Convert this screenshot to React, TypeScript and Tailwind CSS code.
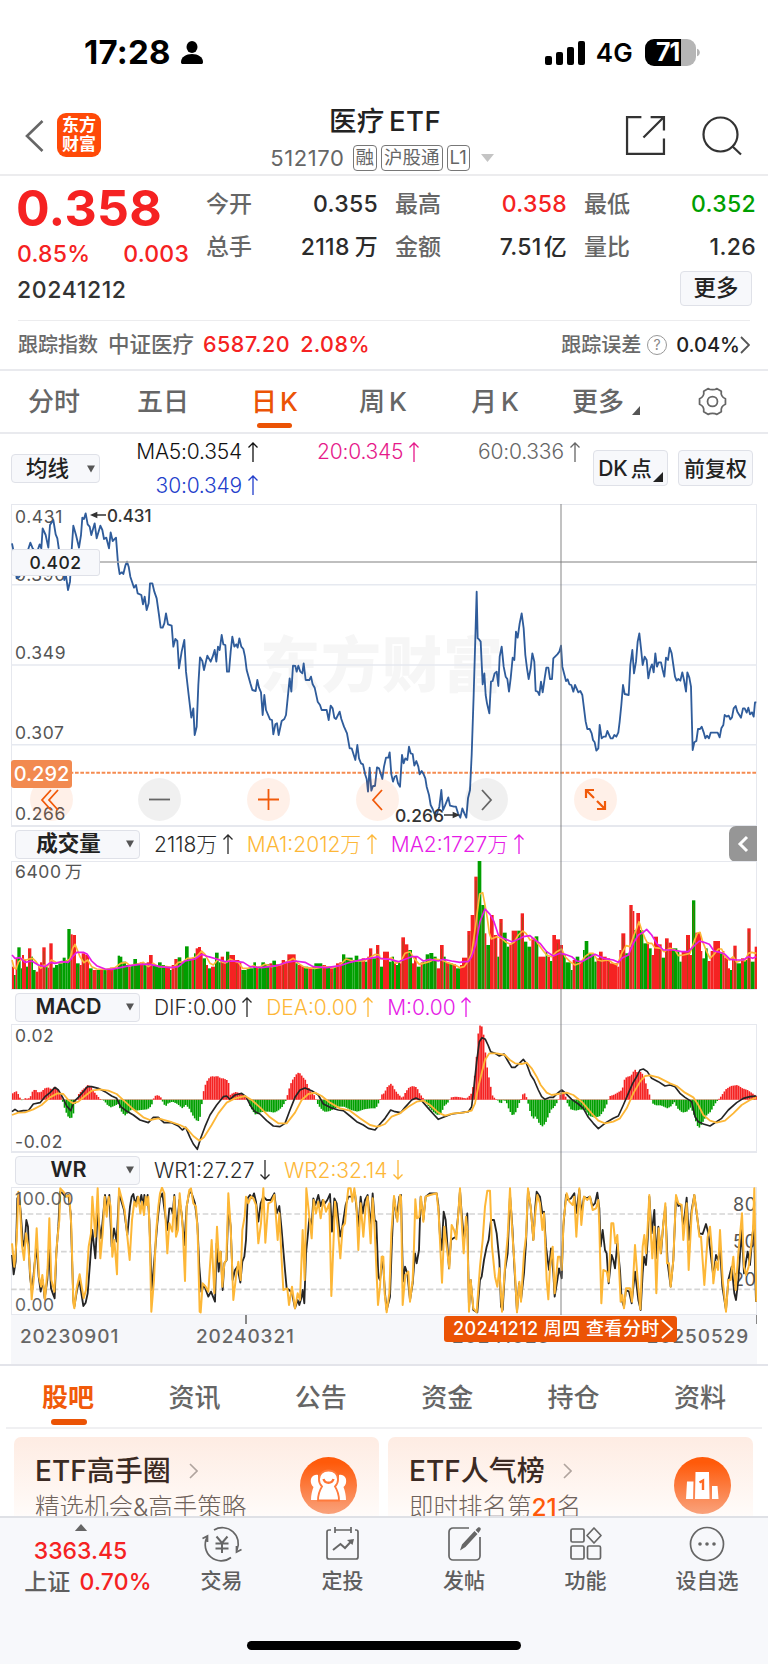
import React from "react";

const PRICE_A =
  "36,145 42,175 50,250 58,245 70,200 84,165 91,143 98,160 110,175 119,148 124,160 128,100 137,120 145,158 150,90 160,75 167,118 172,130 177,165 185,200 193,255 197,235 204,285 210,260 215,165 220,92 228,120 237,158 243,120 247,68 252,72 257,55 263,88 269,95 274,120 284,85 290,130 301,92 307,105 312,132 319,128 327,160 332,112 338,138 348,128 354,205 359,237 366,232 370,237 376,212 381,200 386,215 391,245 402,278 408,270 413,295 424,300 429,328 434,305 440,345 446,325 450,265 457,265 463,290 470,310 477,360 482,398 488,398 493,385 498,355 504,388 515,392 520,455 526,432 532,438 537,520 545,470 553,435 558,530 566,600 574,668 580,640 584,720 590,695 595,570 600,487 607,498 612,525 622,482 632,500 638,485 644,465 649,500 654,455 659,465 665,420 670,448 676,450 681,530 687,530 692,470 697,425 703,455 709,448 713,458 718,430 724,455 730,462 735,485 740,525 751,565 757,585 767,588 772,555 777,578 783,592 788,660 793,600 798,645 810,673 816,675 820,718 826,688 831,685 836,720 845,678 853,672 858,660 863,610 869,550 874,590 879,512 886,513 890,530 895,512 901,530 907,535 911,505 917,555 928,555 933,545 938,568 944,578 953,620 960,630 965,645 980,645 986,675 992,632 998,640 1003,668 1008,672 1019,650 1024,672 1032,695 1041,715 1049,760 1055,760 1066,795 1072,750 1077,790 1083,805 1089,808 1096,840 1100,852 1104,890 1109,818 1114,887 1119,873 1125,873 1131,817 1137,820 1142,852 1147,852";
const PRICE_B =
  "7,852 12,815 18,788 25,788 29,772 34,838 39,860 44,845 49,842 54,865 60,875 66,780 71,805 76,790 82,795 87,755 92,775 98,777 103,812 109,798 115,815 119,838 125,828 131,838 136,850 140,875 147,900 152,930 158,942 163,955 168,965 173,950 178,935 184,885 189,945 195,932 205,907 210,932 222,935 228,935 234,955 241,968 247,940 253,955 259,968 264,910 270,885 275,780 281,600 286,430 290,290 293,430 296,432 302,440 308,568 313,535 317,600 321,625 328,655 333,560 338,558 344,535 350,530 355,573 359,485 365,455 371,515 377,545 382,552 387,590 392,550 398,488 403,495 408,410 413,428 419,385 425,355 431,400 436,480 441,520 446,552 452,520 457,475 463,500 467,588 473,590 478,600 483,560 488,592 494,550 499,518 505,518 510,552 516,552 520,490 532,478 538,470 543,452 547,515 558,558 563,553 568,568 574,570 580,590 585,570 595,592 601,588 607,600 612,640 617,680 622,702 629,702 635,715 639,735 644,742 649,767 655,760 659,690 665,730 671,725 677,725 682,708 692,730 698,730 703,720 709,725 715,712 719,680 724,630 729,570 734,597 746,600 751,510 757,465 762,535 768,500 773,440 778,415 783,460 788,510 794,485 800,495 805,550 811,520 816,508 821,532 826,475 831,515 836,502 843,502 848,525 853,545 858,488 864,495 869,458 875,475 880,510 885,545 890,557 895,552 901,557 907,532 912,555 918,590 922,532 928,548 933,575 936,690 938,765 943,742 949,738 954,702 960,702 965,695 971,712 976,730 981,722 987,730 992,713 1013,713 1019,727 1024,700 1030,690 1034,660 1040,665 1046,662 1051,673 1056,667 1061,640 1067,633 1072,650 1083,668 1089,640 1094,640 1100,653 1105,638 1110,658 1116,652 1121,665 1125,622 1129,622";

/* Volume runs: "x top colour", each run reaches to the start of the next one. */
const VOL_A =
  "36 425 r,42 450 g,47 400 r,52 367 g,62 430 g,66 390 r,72 402 r,78 425 g,84 370 r,94 395 g,99 435 g,107 440 r,115 420 r,120 412 r,127 367 r,137 425 g,143 428 r,148 355 r,158 428 g,165 420 g,175 415 g,188 398 g,197 405 g,202 312 g,212 328 r,218 330 r,228 415 g,239 420 r,245 385 r,256 390 r,267 430 g,278 435 r,290 435 g,300 433 r,310 435 g,320 433 r,330 428 r,340 432 g,353 392 g,360 395 g,367 410 g,378 420 g,385 425 r,392 420 g,400 402 g,411 415 g,420 412 r,430 415 g,440 412 r,447 390 r,458 420 g,474 412 g,485 420 g,495 425 r,510 435 g,515 420 r,523 402 r,533 397 g,544 410 g,555 364 g,566 400 g,575 398 r,582 385 g,587 370 r,594 366 r,603 378 r,608 400 g,618 420 r,624 430 g,633 425 r,645 383 g,656 412 g,662 395 r,672 415 r,678 380 g,688 390 r,705 405 r,718 412 r,724 435 g,740 430 g,760 412 g,768 428 r,775 425 g,784 412 g,795 418 g,808 415 r,817 407 g,828 418 r,845 405 r,855 410 r,862 388 r,887 415 g,893 420 r,905 425 r,912 425 g,925 428 r,937 425 g,943 415 g,967 420 r,978 425 g,990 430 r,1000 425 g,1008 415 r,1018 412 r,1026 388 g,1036 398 g,1058 405 g,1064 392 g,1075 405 g,1085 400 r,1095 410 g,1102 395 r,1107 370 r,1117 400 g,1128 360 r,1138 395 r,1144 425 g,1149 380 r,1165 400 r";
const VOL_B =
  "0 425 g,9 380 r,27 410 g,35 395 g,42 415 r,48 420 g,54 410 g,60 415 r,64 337 r,75 358 r,85 375 g,96 415 r,102 395 r,110 425 g,122 412 r,128 410 g,137 388 g,148 384 g,160 395 g,170 430 r,180 360 r,191 395 g,197 412 r,208 415 g,218 418 r,228 430 g,240 420 r,246 398 r,262 318 r,272 270 r,283 155 r,293 108 g,304 240 g,314 325 r,319 360 g,330 270 r,341 330 r,352 395 g,358 282 r,368 323 g,380 365 g,388 358 r,395 317 r,412 317 g,422 265 r,432 350 g,442 365 g,454 340 r,464 334 g,475 395 r,497 380 g,502 395 r,510 408 g,517 330 r,528 343 r,540 360 r,549 388 g,557 412 g,572 435 g,578 405 r,587 395 g,598 410 r,609 375 g,614 348 g,625 385 g,635 388 g,643 410 g,650 400 r,657 380 r,668 395 r,680 400 r,690 415 r,712 425 r,718 375 r,724 325 r,736 385 g,748 240 r,758 258 r,763 315 g,769 264 r,780 315 g,790 355 g,801 352 r,807 370 g,815 390 r,822 335 r,834 358 r,845 398 g,855 340 r,866 353 r,876 370 g,892 380 g,898 410 g,905 380 r,918 330 r,930 390 r,936 226 g,946 323 r,963 378 r,967 400 g,975 370 g,983 408 r,992 378 r,1000 348 r,1020 385 g,1027 378 r,1033 398 r,1044 430 r,1050 435 g,1056 400 r,1060 362 r,1070 415 g,1083 400 r,1092 405 g,1102 310 r,1112 410 g,1124 365 r";
const VMA1_A =
  "36,405 42,428 48,432 56,410 66,402 78,405 88,402 98,400 108,410 122,430 132,420 142,425 154,405 168,412 185,413 200,408 210,402 218,370 225,358 232,375 240,395 252,413 263,405 275,425 290,432 320,433 345,428 362,415 378,412 390,422 410,418 430,412 445,425 460,415 475,425 500,425 520,428 535,412 550,410 562,400 575,400 590,395 605,378 615,388 630,415 640,420 655,402 668,412 680,412 690,402 702,408 715,412 728,430 745,430 760,422 775,428 795,418 815,425 840,420 860,412 880,400 895,415 915,428 945,430 975,425 1000,428 1020,420 1038,402 1060,408 1090,408 1110,398 1125,388 1138,390 1150,398 1169,398";
const VMA1_B =
  "0,400 20,403 35,398 48,415 62,410 75,385 90,380 102,400 118,418 130,415 148,410 165,402 185,405 200,412 225,420 240,428 252,425 262,412 275,385 287,300 294,245 299,207 308,203 315,240 322,280 328,325 334,342 350,335 365,340 378,352 392,358 402,352 415,330 428,318 438,325 450,345 465,340 475,358 490,378 500,390 515,395 530,380 545,372 555,395 570,410 585,420 600,415 615,395 628,385 640,385 652,405 665,408 685,405 700,415 712,420 725,385 738,362 750,365 762,330 770,310 777,290 785,315 795,340 803,355 815,355 825,368 842,370 852,380 870,370 885,375 895,392 910,390 930,385 942,350 952,325 960,322 968,350 980,380 990,400 1002,388 1015,372 1025,372 1035,395 1048,405 1060,395 1070,412 1085,405 1095,408 1105,385 1115,382 1129,385";
const VMA2_A =
  "36,390 45,400 60,398 75,412 95,408 115,420 135,425 152,412 165,415 185,410 205,412 218,395 230,382 250,382 262,388 275,408 290,422 315,432 335,433 360,428 390,422 420,418 450,418 480,425 510,428 535,425 555,408 585,402 605,388 625,395 650,402 675,410 700,408 730,412 750,425 785,428 830,422 860,412 885,408 915,412 940,425 980,428 1020,422 1050,412 1080,405 1110,400 1135,395 1150,398 1170,400";
const VMA2_B =
  "0,400 30,403 55,410 75,403 95,395 112,395 130,408 150,403 175,408 190,403 215,408 240,412 252,410 265,410 275,395 287,360 300,290 315,252 330,268 342,290 355,330 370,340 395,350 410,345 430,335 450,332 465,345 480,355 500,380 520,393 540,385 555,388 575,395 590,408 605,410 620,402 645,388 670,400 700,405 715,412 728,398 745,390 760,355 775,330 790,322 800,313 815,330 830,355 850,375 880,375 905,380 925,380 945,360 958,348 972,352 988,358 1002,378 1020,382 1035,388 1050,403 1070,405 1090,405 1105,395 1118,400 1129,395";

const HIST_A =
  "36,40 46,33 54,45 60,59 66,62 74,54 82,57 90,48 96,32 104,28 112,38 122,35 132,25 142,22 152,28 162,20 170,28 180,45 184,59 190,80 200,108 208,115 216,112 222,75 228,59 234,42 244,30 254,22 262,14 272,22 282,38 292,50 300,59 310,62 320,75 330,82 340,78 352,72 360,92 372,107 382,98 392,88 405,92 420,90 440,88 452,78 457,59 462,48 472,45 480,52 486,66 494,80 502,70 515,65 530,72 545,85 555,75 565,85 575,105 585,120 592,124 598,110 602,80 605,59 608,35 615,10 622,-3 632,-12 640,-10 650,-12 660,-5 668,-5 678,0 684,10 688,45 695,40 705,36 720,40 732,46 740,55 746,75 755,92 765,105 775,98 790,95 805,95 820,98 832,92 845,80 855,62 860,45 868,15 875,0 882,-10 890,-22 898,-20 905,-10 914,0 922,20 930,35 940,45 946,59 952,75 960,85 970,95 980,95 990,92 1002,85 1015,80 1030,80 1050,90 1070,95 1090,88 1110,85 1125,85 1132,72 1138,58 1141,45";
const HIST_B =
  "0,45 10,40 20,20 32,10 42,30 52,42 65,55 75,35 85,22 96,18 108,22 116,40 124,50 132,62 145,82 160,98 172,106 182,98 190,78 200,70 205,62 212,52 225,50 240,52 255,55 262,52 272,40 280,5 288,-80 294,-162 302,-165 308,-140 314,-80 320,-30 328,10 334,45 342,55 350,60 360,72 368,60 376,64 385,90 396,108 406,95 415,70 420,59 428,38 434,42 440,62 448,95 456,118 465,108 475,130 484,140 494,130 502,110 510,90 520,82 530,66 540,40 546,36 554,48 560,70 570,88 585,92 600,88 615,92 625,108 640,112 655,110 665,98 675,80 682,62 688,48 700,44 715,35 724,30 732,-5 740,-10 750,-12 762,-32 770,-22 782,-25 792,0 800,25 808,50 815,70 825,76 840,76 860,85 872,78 880,65 890,85 905,98 918,95 930,82 940,105 948,135 955,144 965,128 978,105 990,95 1000,75 1010,62 1020,50 1035,28 1050,18 1070,15 1085,25 1100,30 1115,40 1129,50";
const DIF_A =
  "36,95 45,88 55,95 70,92 85,92 100,72 120,68 135,50 150,38 165,22 175,30 188,52 200,78 212,92 222,65 235,52 250,35 262,20 275,20 295,25 315,35 335,48 350,55 362,80 378,92 400,105 420,120 445,128 460,112 475,112 492,128 515,128 535,138 547,150 557,142 570,172 580,192 592,208 602,175 615,140 630,105 650,75 670,50 680,48 690,58 705,45 725,40 738,50 752,78 765,95 780,102 800,122 820,138 840,140 855,130 870,90 885,52 900,30 915,24 935,32 955,45 970,72 990,82 1015,90 1030,92 1050,108 1070,125 1090,135 1105,145 1125,150 1140,132";
const DIF_B =
  "0,132 15,115 32,90 45,95 62,98 75,82 95,60 108,54 125,62 145,85 160,102 175,118 190,112 215,102 245,98 265,95 275,80 282,20 290,-55 298,-115 306,-127 316,-122 324,-105 332,-85 345,-80 358,-72 372,-78 382,-60 395,-38 405,-38 418,-50 430,-62 440,-48 452,-15 462,0 475,30 485,50 495,58 510,52 520,52 532,40 545,30 555,38 575,58 595,72 610,85 625,112 640,130 655,146 675,130 700,115 715,108 730,75 745,40 758,10 770,-10 780,-30 790,-33 802,-25 815,-5 835,5 855,18 870,15 885,20 900,40 915,52 935,65 945,110 955,125 970,132 990,138 1010,125 1025,115 1045,90 1070,68 1090,55 1110,50 1129,48";
const DEA_A =
  "36,105 55,98 75,97 100,88 125,75 150,52 172,40 190,42 205,60 218,70 235,65 255,48 275,32 300,28 325,32 350,42 375,65 400,88 430,112 450,120 475,115 510,125 540,135 560,145 580,168 598,182 612,172 635,135 655,100 680,68 705,55 735,48 755,60 780,82 810,112 835,130 860,130 885,98 905,60 925,42 945,38 965,48 990,68 1020,85 1050,92 1080,115 1110,135 1130,140 1140,138";
const DEA_B =
  "0,138 15,132 35,110 60,100 85,80 110,65 130,62 150,75 175,98 195,107 220,100 250,98 275,92 285,70 295,20 305,-20 315,-60 328,-80 350,-80 375,-75 390,-60 405,-50 425,-48 440,-52 455,-35 470,-10 482,15 500,38 515,45 535,42 560,38 580,45 605,65 635,100 655,122 675,130 700,125 720,115 740,85 760,40 780,5 795,-12 810,-14 835,-8 870,10 890,18 915,38 940,52 955,75 970,105 990,122 1010,128 1035,122 1060,100 1085,75 1110,60 1129,53";

const WR1_A =
  "36,525 41,583 47,545 52,355 57,345 62,395 68,480 73,500 79,420 84,440 90,590 96,635 104,550 110,500 116,590 122,635 128,600 134,655 142,600 147,500 153,625 160,645 164,655 169,520 175,440 180,335 188,340 196,350 205,345 212,400 220,660 223,680 231,630 238,600 250,678 257,668 263,640 270,550 277,450 286,535 293,400 303,475 310,400 315,345 320,380 328,345 335,500 342,445 350,485 357,340 363,360 372,390 382,465 390,380 395,350 400,342 406,375 412,350 418,370 424,345 430,380 433,345 438,370 443,345 448,420 455,630 463,540 472,430 480,355 487,340 495,400 502,450 508,385 514,385 518,400 523,345 530,450 538,360 545,400 553,495 560,380 568,335 575,340 585,370 592,430 598,560 604,635 612,615 625,650 633,635 645,665 650,490 656,575 662,515 668,630 673,550 680,540 685,380 692,440 698,600 705,570 712,560 721,608 727,545 733,530 738,480 743,355 750,345 756,355 762,340 768,365 775,425 782,370 790,350 800,360 812,360 823,340 830,400 838,378 845,450 855,570 860,625 868,630 876,640 885,685 893,660 898,675 905,650 908,630 913,670 918,520 923,470 928,415 935,440 940,355 946,375 955,345 962,378 968,360 975,370 982,360 990,342 996,455 1003,355 1010,370 1020,470 1027,440 1037,375 1045,350 1055,350 1065,340 1075,440 1082,350 1088,400 1095,360 1103,345 1112,440 1118,340 1124,420 1129,425 1135,590 1140,600";
const WR1_B =
  "0,600 8,530 15,640 20,690 30,650 36,480 42,350 50,415 58,350 63,345 69,605 75,560 82,580 90,660 98,610 105,520 110,550 117,510 122,350 130,420 137,350 150,340 170,340 175,375 180,470 185,510 191,395 197,420 207,565 213,480 220,475 228,470 235,400 240,330 245,400 252,480 262,400 267,690 272,600 280,690 292,697 300,600 305,590 312,540 320,500 326,480 333,420 342,420 350,460 358,540 363,680 368,690 375,570 383,520 390,345 397,440 403,560 411,695 417,610 423,660 432,580 438,490 444,330 452,380 460,480 466,380 470,335 480,350 487,400 492,395 498,500 507,570 513,505 520,580 524,650 532,600 537,565 545,595 550,440 558,345 565,360 573,355 583,340 588,400 598,330 604,400 612,350 620,355 630,350 637,378 645,370 652,338 658,385 662,500 668,450 675,510 680,520 686,610 695,525 700,540 705,565 712,490 720,570 725,660 732,680 738,630 747,635 755,670 765,575 775,660 782,690 788,580 792,530 798,555 803,480 808,350 815,460 823,390 828,535 835,440 843,520 850,430 856,380 863,550 872,620 880,540 888,350 895,378 903,375 910,440 920,353 927,480 935,390 943,345 950,400 958,460 968,462 978,432 985,460 993,530 1000,590 1008,525 1015,540 1020,500 1027,620 1038,690 1045,600 1055,560 1063,640 1068,660 1075,600 1085,450 1092,580 1103,515 1110,555 1118,460 1122,430 1125,560 1128,665";
const WR2_A =
  "36,490 43,560 50,480 55,335 60,380 66,495 72,540 78,460 85,500 92,600 95,658 102,590 110,445 117,590 123,620 127,585 135,660 143,560 148,415 154,600 163,635 170,500 178,420 181,325 190,335 200,350 208,345 214,440 220,670 223,685 230,625 239,583 245,620 251,655 258,630 266,500 273,460 277,350 286,470 293,325 301,535 308,460 314,350 320,410 326,350 332,380 337,530 343,480 351,583 357,325 365,355 374,390 380,450 389,540 396,420 403,365 409,380 415,350 421,400 426,365 432,405 437,350 441,375 445,350 449,460 454,695 462,600 468,460 475,380 480,340 486,323 493,340 498,440 502,520 508,430 517,455 523,350 528,470 534,450 539,340 548,440 555,603 560,380 568,330 573,325 580,370 588,380 593,460 599,695 602,697 608,610 617,620 625,635 635,480 643,640 651,440 657,545 662,515 667,620 673,550 679,540 685,340 692,440 700,660 708,590 715,545 722,600 727,450 734,410 738,350 745,370 753,350 760,355 768,375 775,490 783,430 790,325 796,488 805,370 815,365 823,345 833,480 838,400 845,540 850,630 862,625 867,675 876,620 885,685 893,640 900,660 908,450 914,600 919,325 928,410 935,475 941,360 948,400 955,365 962,415 970,360 978,395 988,370 994,648 1000,500 1005,365 1013,440 1021,535 1028,440 1035,430 1040,370 1045,325 1052,325 1057,365 1063,325 1069,370 1075,510 1082,370 1090,470 1097,380 1103,350 1112,490 1118,355 1124,450 1134,675 1140,620";
const WR2_B =
  "0,620 5,530 10,530 14,640 20,697 28,640 34,460 42,348 52,425 60,345 63,350 68,675 76,585 85,575 90,665 98,600 102,500 106,358 111,415 118,410 123,350 130,425 137,350 150,345 170,340 176,400 186,608 193,440 200,500 208,565 215,435 222,450 229,478 235,400 240,325 246,440 251,520 258,410 262,450 267,695 272,600 280,685 290,697 300,560 308,480 315,380 322,332 330,332 336,500 345,590 352,620 358,565 366,695 375,560 383,470 390,325 397,460 404,560 411,697 418,605 423,665 432,520 438,470 444,325 452,380 460,480 466,400 472,345 480,370 487,450 492,400 500,600 505,658 510,560 518,500 524,640 534,530 540,530 545,570 551,420 560,340 568,365 578,375 583,350 589,470 598,325 604,435 612,350 622,360 630,350 638,390 648,385 655,360 658,440 664,670 670,570 680,575 686,605 694,430 700,430 706,490 712,465 717,560 722,665 727,645 732,685 738,625 750,625 756,665 765,495 773,600 781,688 788,500 793,465 798,520 803,440 808,345 813,470 817,535 823,440 829,640 836,445 842,520 850,430 856,370 861,550 867,550 872,620 880,540 888,345 895,370 905,375 910,480 920,370 926,570 935,400 943,345 950,395 958,470 963,470 973,615 983,470 990,440 995,500 1000,610 1008,545 1014,570 1020,450 1028,600 1038,695 1045,600 1052,600 1060,530 1067,630 1075,520 1086,400 1092,560 1098,585 1106,560 1113,500 1119,450 1123,325 1129,665";

/* The second half of every series starts at this offset. */
const HALF = 1140;
const UP = "#f52222";
const DOWN = "#009f00";

type Point = [number, number];

const parse = (s: string): Point[] =>
  s.split(" ").map((p) => p.split(",").map(Number) as Point);

function series(a: string, b: string): Point[] {
  return [
    ...parse(a).filter(([x]) => x <= HALF),
    ...parse(b).map(([x, y]) => [x + HALF, y] as Point),
  ];
}

function Line({ a, b, color, w = 4 }: { a: string; b: string; color: string; w?: number }) {
  return (
    <polyline
      points={series(a, b).map((p) => p.join(",")).join(" ")}
      fill="none"
      stroke={color}
      strokeWidth={w}
      strokeLinejoin="round"
    />
  );
}

function VolumeBars() {
  const read = (s: string, dx: number) =>
    s.split(",").map((r) => {
      const [x, top, c] = r.split(" ");
      return { x: Number(x) + dx, top: Number(top), up: c === "r" };
    });
  const runs = [...read(VOL_A, 0).filter((r) => r.x < HALF), ...read(VOL_B, HALF)];
  return (
    <g>
      {runs.map((r, i) => {
        const end = i + 1 < runs.length ? runs[i + 1].x : 2271;
        return (
          <g key={r.x}>
            <rect x={r.x} y={r.top} width={end - r.x} height={492 - r.top} fill={r.up ? UP : DOWN} />
            {end - r.x >= 10 && i % 2 === 0 && (
              <rect x={r.x + 4} y={r.top + 12} width={1.6} height={480 - r.top} fill={r.up ? DOWN : UP} opacity={0.6} />
            )}
          </g>
        );
      })}
    </g>
  );
}

function Histogram() {
  const pts = series(HIST_A, HIST_B);
  const bars: Point[] = [];
  let k = 0;
  for (let x = 36; x < 2268; x += 5.35) {
    while (k < pts.length - 2 && pts[k + 1][0] < x) k++;
    const [x0, y0] = pts[k];
    const [x1, y1] = pts[k + 1];
    bars.push([x, y0 + ((y1 - y0) * (x - x0)) / (x1 - x0)]);
  }
  return (
    <g>
      {bars.map(([x, y]) => (
        <rect key={x} x={x} y={Math.min(y, 59)} width={4.9} height={Math.abs(y - 59)} fill={y < 59 ? UP : DOWN} />
      ))}
      <line x1={36} x2={2268} y1={59} y2={59} stroke={UP} strokeWidth={2} opacity={0.5} />
    </g>
  );
}

function Arrow({ down = false }: { down?: boolean }) {
  return (
    <svg viewBox="0 0 10 20" className="h-[20px] w-[10px] shrink-0" fill="none" stroke="currentColor" strokeWidth="1.3">
      <path d={down ? "M5 0V19M.500 14.500L5 19l4.500-4.500" : "M5 20V1M.500 5.500L5 1l4.500 4.500"} />
    </svg>
  );
}

function Select({ label }: { label: string }) {
  return (
    <div className="ml-[4px] flex h-[29px] w-[125px] items-center rounded-[4px] border border-[#dfe1e8] bg-[#f7f8fb] pr-[5px]">
      <span className="w-[105px] text-center text-[21.500px] leading-none font-semibold text-[#222]">{label}</span>
      <svg viewBox="0 0 8 7" className="ml-auto h-[8px] w-[8px] text-[#555]"><path d="M0 0h8L4 7z" fill="currentColor" /></svg>
    </div>
  );
}

function IndicatorRow({ label, children }: { label: string; children: React.ReactNode }) {
  return (
    <div className="relative flex h-[35px] items-center border-t border-[#e6e8ee]">
      <Select label={label} />
      <div className="ml-[14px] flex items-center gap-[14px] text-[21px] leading-none font-light">{children}</div>
    </div>
  );
}

function Reading({ text, tone, down = false }: { text: string; tone: string; down?: boolean }) {
  return (
    <span className={`flex items-center gap-[5.5px] ${tone}`}>
      {text}
      <Arrow down={down} />
    </span>
  );
}

function Quote({ label, value, unit, tone = "text-[#2b2b2b]" }: { label: string; value: string; unit?: string; tone?: string }) {
  return (
    <div className="flex h-[43px] items-center justify-between leading-none">
      <span className="text-[23px] font-medium text-[#666]">{label}</span>
      <span className={`flex text-[23px] font-medium tracking-[0.3px] ${tone}`}>
        <span>{value}</span>
        {unit && <span className={unit === "万" ? "ml-[5px]" : "ml-[2px]"}>{unit}</span>}
      </span>
    </div>
  );
}

function Round({ left, gray = false, children }: { left: string; gray?: boolean; children: React.ReactNode }) {
  return (
    <div className={`absolute top-[273px] flex size-[43px] items-center justify-center rounded-full ${left} ${gray ? "bg-[#000]/[0.06] text-[#666]" : "bg-[#fd5a05]/[0.09] text-[#f15a0a]"}`}>
      <svg viewBox="0 0 43 43" className="size-[43px]" fill="none" stroke="currentColor" strokeWidth="1.8">{children}</svg>
    </div>
  );
}

const chartBox = "relative border-[#e6e8ee] border";
const axis = "absolute left-[3px] text-[17.5px] leading-none tracking-[0.6px] text-[#555]";
const level = "absolute left-[721px] text-[18px] leading-none tracking-[0.5px] text-[#555]";
const layer = "absolute -top-px -left-px w-[746px]";

function Charts() {
  return (
    <section className="relative mx-[11px] shrink-0">
      <div className={`${chartBox} h-[322px]`}>
        <div className="absolute top-[130px] left-[248px] text-[60px] leading-none font-black tracking-[1px] text-[#f6f6f6]">东方财富</div>
        <svg viewBox="33 27 2238 966" className={`${layer} h-[322px]`}>
          <path d="M33 269H2271M33 510H2271M33 749H2271" stroke="#e6e9f0" strokeWidth="4.500" />
          <path d="M33 833.500H2271" stroke="#f58b50" strokeWidth="6" strokeDasharray="11 5" />
        </svg>
        <span className={`${axis} top-[3px]`}>0.431</span>
        <span className={`${axis} top-[61px]`}>0.390</span>
        <span className={`${axis} top-[139px]`}>0.349</span>
        <span className={`${axis} top-[219px]`}>0.307</span>
        <span className={`${axis} top-[300px]`}>0.266</span>
        <svg viewBox="33 27 2238 966" className={`${layer} h-[322px]`}>
          <Line a={PRICE_A} b={PRICE_B} color="#2f5c9b" w={5.5} />
          <path d="M33 201H2271" stroke="#aaa" strokeWidth="5" />
          <path d="M278 60h40M1332 960h36" stroke="#333" strokeWidth="4" />
          <path d="M270 60l22-10v20zM1380 960l-22-10v20z" fill="#333" />
        </svg>
        <span className="absolute top-[3px] left-[95px] text-[17px] leading-none font-medium text-[#333]">0.431</span>
        <span className="absolute top-[302px] left-[383px] text-[17.5px] leading-none font-medium text-[#333]">0.266</span>
        <div className="absolute top-[44px] -left-px flex h-[27px] w-[89px] items-center justify-center rounded-[3px] border border-[#dfe1e8] bg-[#f7f8fb] text-[17.500px] leading-none font-medium tracking-[0.5px] text-[#222]">0.402</div>
        <Round left="left-[18px]"><path d="M21 12l-9 10 9 10M28 12l-9 10 9 10" /></Round>
        <Round left="left-[126px]" gray><path d="M11 21.500H32" /></Round>
        <Round left="left-[235px]"><path d="M11 21.500H32M21.500 11V32" /></Round>
        <Round left="left-[344px]"><path d="M26 12l-9 10 9 10" /></Round>
        <Round left="left-[453px]" gray><path d="M17 12l9 10-9 10" /></Round>
        <Round left="left-[562px]"><path d="M12 20v-8h8M12 12l8 8M31 23v8h-8M31 31l-8-8" strokeWidth="2.200" /></Round>
        <div className="absolute top-[255px] -left-px flex h-[28px] w-[61px] items-center justify-center rounded-[3px] bg-[#f28a50] text-[20px] leading-none font-medium text-white">0.292</div>
      </div>

      <IndicatorRow label="成交量">
        <Reading text="2118万" tone="text-[#2b2b2b]" />
        <Reading text="MA1:2012万" tone="text-[#fdb737]" />
        <Reading text="MA2:1727万" tone="text-[#e61ae6]" />
        <div className="absolute -top-px right-0 flex h-[36px] w-[28px] items-center justify-center rounded-l-[7px] bg-[#969696]">
          <svg viewBox="0 0 12 18" className="h-[18px] w-[12px]" fill="none" stroke="#fff" strokeWidth="3"><path d="M10 2L3 9l7 7" /></svg>
        </div>
      </IndicatorRow>
      <div className={`${chartBox} h-[128px]`}>
        <svg viewBox="33 108 2238 384" className={`${layer} h-[128px]`}>
          <VolumeBars />
          <Line a={VMA1_A} b={VMA1_B} color="#fdb737" w={5} />
          <Line a={VMA2_A} b={VMA2_B} color="#e61ae6" w={5} />
        </svg>
        <span className={`${axis} top-[1px]`}>6400<span className="ml-[3px]">万</span></span>
      </div>

      <IndicatorRow label="MACD">
        <Reading text="DIF:0.00" tone="text-[#2b2b2b]" />
        <Reading text="DEA:0.00" tone="text-[#fdb737]" />
        <Reading text="M:0.00" tone="text-[#e61ae6]" />
      </IndicatorRow>
      <div className={`${chartBox} h-[128px]`}>
        <svg viewBox="33 -168 2238 384" className={`${layer} h-[128px]`}>
          <Histogram />
          <Line a={DIF_A} b={DIF_B} color="#252525" w={5} />
          <Line a={DEA_A} b={DEA_B} color="#fdb737" w={5.5} />
        </svg>
        <span className={`${axis} top-[2px]`}>0.02</span>
        <span className={`${axis} bottom-[1px]`}>-0.02</span>
      </div>

      <IndicatorRow label="WR">
        <Reading text="WR1:27.27" tone="text-[#2b2b2b]" down />
        <Reading text="WR2:32.14" tone="text-[#fdb737]" down />
      </IndicatorRow>
      <div className={`${chartBox} h-[128px]`}>
        <svg viewBox="33 321 2238 384" className={`${layer} h-[128px]`}>
          <path d="M33 402H2271M33 515H2271M33 628H2271" stroke="#d5d5d5" strokeWidth="5" strokeDasharray="17 8" />
        </svg>
        <span className={`${level} top-[8px]`}>80</span>
        <span className={`${level} top-[45px]`}>50</span>
        <span className={`${level} top-[83px]`}>20</span>
        <svg viewBox="33 321 2238 384" className={`${layer} h-[128px]`}>
          <Line a={WR1_A} b={WR1_B} color="#252525" w={5.5} />
          <Line a={WR2_A} b={WR2_B} color="#fdb737" w={6} />
        </svg>
        <span className={`${axis} top-[2px] opacity-90`}>100.00</span>
        <span className={`${axis} bottom-[1px] opacity-90`}>0.00</span>
      </div>

      <div className="relative h-[49px] bg-[#f6f7fa] text-[19px] leading-none font-medium tracking-[0.9px] text-[#666]">
        <span className="absolute top-[12px] left-[9px]">20230901</span>
        <span className="absolute top-[12px] left-[185px]">20240321</span>
        <span className="absolute top-[12px] left-[441px]">20241023</span>
        <span className="absolute top-[12px] right-[8px]">20250529</span>
        <span className="absolute top-0 left-[234px] h-[9px] w-[1.5px] bg-[#888]" />
        <span className="absolute top-0 right-0 h-[9px] w-[1.5px] bg-[#888]" />
        <div className="absolute top-[1px] left-[433px] z-10 flex h-[26px] w-[233px] items-center justify-between rounded-[3px] bg-[#eb5305] pr-[4px] pl-[9px] text-[18px] tracking-[0.45px] whitespace-nowrap text-white">
          <span>20241212 周四 查看分时</span>
          <svg viewBox="0 0 12 20" className="h-[20px] w-[12px]" fill="none" stroke="#fff" strokeWidth="1.800"><path d="M1 1l10 9L1 19" /></svg>
        </div>
      </div>
      <div className="absolute top-0 left-[549px] h-[811px] w-[1.5px] bg-[#777]/45" />
    </section>
  );
}

const tool = "flex h-[36px] w-[75px] items-center justify-center rounded-[4px] border border-[#dfe1e8] bg-[#f7f8fb] text-[21px] leading-none font-medium text-[#222]";
const tag = "flex h-[26px] items-center rounded-[4px] border border-[#777] px-[2px] leading-none";

function NavItem({ label, children, width }: { label: string; children: React.ReactNode; width: string }) {
  return (
    <div className={`flex flex-col items-center pt-[8px] ${width}`}>
      <svg viewBox="0 0 40 36" className="h-[36px] w-[40px]" fill="none" stroke="#666" strokeWidth="1.7">{children}</svg>
      <span className="mt-[7px] text-[21px] leading-[24px] font-medium text-[#5f5f5f]">{label}</span>
    </div>
  );
}

function Card({ title, icon, children }: { title: string; icon: React.ReactNode; children: React.ReactNode }) {
  return (
    <div className="flex h-[125px] w-[365px] shrink-0 justify-between rounded-[7px] bg-[linear-gradient(180deg,#feece3_0%,#fff8f4_50%,#fff_75%)] pr-[22px] pl-[21px]">
      <div className="pt-[16px] whitespace-nowrap">
        <div className="flex items-center text-[28px] leading-[36px] font-medium text-[#3b2a23]">
          {title}
          <svg viewBox="0 0 9 16" className="ml-[18px] h-[16px] w-[9px]" fill="none" stroke="#b0a49e" strokeWidth="1.600"><path d="M1 1l7 7-7 7" /></svg>
        </div>
        <div className="text-[24.500px] leading-[37px] font-light text-[#6e625b]">{children}</div>
      </div>
      <svg viewBox="0 0 57 57" className="mt-[20px] size-[57px]">
        <defs><linearGradient id="disc" x1="0" y1="0" x2="0" y2="1"><stop offset="0.1" stopColor="#ff5a0a" /><stop offset="1" stopColor="#f9a27c" /></linearGradient></defs>
        <circle cx="28.500" cy="28.500" r="28.500" fill="url(#disc)" />
        {icon}
      </svg>
    </div>
  );
}

export default function App() {
  return (
    <div className="flex h-[1665px] w-[768px] flex-col overflow-hidden bg-white font-['Inter','Noto_Sans_CJK_SC',sans-serif] text-[#222]">
      <div className="flex h-[80px] shrink-0 items-center justify-between pt-[25px] pr-[68px] pl-[84px] text-black">
        <div className="flex items-center gap-[9px]">
          <span className="w-[88px] text-[33px] leading-none font-bold tracking-[0.2px] whitespace-nowrap">17:28</span>
          <svg viewBox="0 0 22 24" className="h-[24px] w-[22px]"><ellipse cx="11" cy="6" rx="5.500" ry="6" /><path d="M0 21c0-5 5-8 11-8s11 3 11 8c0 1.500-.5 2-2 2H2c-1.500 0-2-.5-2-2z" /></svg>
        </div>
        <div className="flex items-center">
          <svg viewBox="0 0 40 24" className="h-[24px] w-[40px]"><rect y="15" width="7" height="9" rx="2" /><rect x="11" y="11" width="7" height="13" rx="2" /><rect x="22" y="6" width="7" height="18" rx="2" /><rect x="33" width="7" height="24" rx="2" /></svg>
          <span className="ml-[11px] text-[26px] leading-none font-semibold tracking-[0.2px]">4G</span>
          <div className="ml-[12px] flex h-[27px] w-[51px] items-center rounded-[9px] bg-[linear-gradient(90deg,#000_71%,#b5b5b5_71%)] pl-[11px] text-[25px] leading-none font-bold tracking-[-1px] text-white">71</div>
          <svg viewBox="0 0 4 10" className="ml-[1px] h-[9px] w-[3px]"><path d="M0 0c5 1 5 9 0 10z" fill="#b5b5b5" /></svg>
        </div>
      </div>

      <header className="flex h-[96px] shrink-0 items-center border-b-2 border-[#ececee] pl-[25px]">
        <svg viewBox="0 0 19 32" className="mt-[17px] h-[32px] w-[19px]" fill="none" stroke="#666" strokeWidth="2.600"><path d="M17.500 1L2 16l15.500 15" /></svg>
        <div className="mt-[16px] ml-[13px] flex size-[44px] flex-col items-center justify-center rounded-[9px] bg-[#ff4a08] text-[17px] leading-[19px] font-bold text-white"><span>东方</span><span>财富</span></div>
        <div className="flex flex-1 flex-col items-center pl-[44px]">
          <h1 className="mt-[22px] flex gap-[4px] text-[27.500px] leading-[30px] font-medium tracking-[0.5px]"><span>医疗</span><span>ETF</span></h1>
          <div className="mt-[9px] -ml-[6px] flex items-center gap-[4px] text-[18.500px] text-[#666]">
            <span className="mr-[4px] text-[22px] leading-none tracking-[0.6px]">512170</span>
            <span className={tag}>融</span>
            <span className={tag}>沪股通</span>
            <span className={tag}>L1</span>
            <svg viewBox="0 0 13 8" className="ml-[7px] h-[8px] w-[13px]"><path d="M0 0h13L6.500 8z" fill="#c4c4c4" /></svg>
          </div>
        </div>
        <svg viewBox="0 0 40 40" className="mt-[17px] size-[41px]" fill="none" stroke="#333" strokeWidth="2.200"><path d="M16 2H2v36h36V23M25 2h13v13M38 2L18 22" /></svg>
        <svg viewBox="0 0 40 40" className="mt-[17px] mr-[26px] ml-[36px] size-[40px]" fill="none" stroke="#333" strokeWidth="2.200"><circle cx="18.500" cy="18.500" r="17" /><path d="M30 30l9 8.500" /></svg>
      </header>

      <section className="flex h-[144px] shrink-0 pl-[17px]">
        <div className="w-[189px]">
          <div className="mt-[10px] -ml-[1px] text-[50px] leading-[44px] font-bold tracking-[0.3px] text-[#f52222]">0.358</div>
          <div className="mt-[12px] flex w-[172px] justify-between text-[23px] leading-[24px] font-medium tracking-[0.2px] text-[#f52222]"><span>0.85%</span><span>0.003</span></div>
          <div className="mt-[12px] text-[23px] leading-[24px] font-medium tracking-[0.6px] text-[#333]">20241212</div>
        </div>
        <div className="flex flex-col">
          <div className="mt-[7px] grid w-[550px] grid-cols-3 gap-x-[17px]">
            <Quote label="今开" value="0.355" />
            <Quote label="最高" value="0.358" tone="text-[#f52222]" />
            <Quote label="最低" value="0.352" tone="text-[#009f00]" />
            <Quote label="总手" value="2118" unit="万" />
            <Quote label="金额" value="7.51" unit="亿" />
            <Quote label="量比" value="1.26" />
          </div>
          <div className="mt-[2px] mr-[4px] flex h-[35px] w-[72px] items-center justify-center self-end rounded-[4px] border border-[#dfe1e8] bg-[#f7f8fb] text-[22.500px] leading-none font-medium">更多</div>
        </div>
      </section>

      <section className="mx-[18px] flex h-[49px] shrink-0 items-center border-t border-[#ececee] text-[20px] leading-none font-medium text-[#6a6a6a]">
        <span>跟踪指数</span>
        <span className="ml-[10px] text-[21.500px]">中证医疗</span>
        <span className="ml-[9px] text-[21.500px] tracking-[0.5px] text-[#f52222]">6587.20</span>
        <span className="ml-[10px] text-[21.500px] tracking-[0.4px] text-[#f52222]">2.08%</span>
        <span className="ml-auto">跟踪误差</span>
        <span className="ml-[6px] flex size-[20px] items-center justify-center rounded-full border border-[#999] text-[14px] font-normal text-[#888]">?</span>
        <span className="ml-[9px] text-[20px]  text-[#222]">0.04%</span>
        <svg viewBox="0 0 10 18" className="h-[18px] w-[10px]" fill="none" stroke="#555" strokeWidth="1.800"><path d="M1 1l8 8-8 8" /></svg>
      </section>

      <nav className="flex h-[65px] shrink-0 items-center border-y-2 border-[#e9eaee] text-[26px] leading-none font-medium text-[#666]">
        <span className="ml-[28px] w-[109px]">分时</span>
        <span className="w-[114px]">五日</span>
        <div className="relative flex w-[108px] gap-[3px] text-[#eb5305]"><span>日</span><span>K</span><span className="absolute top-[34px] left-[6px] h-[5px] w-[35px] rounded-full bg-[#eb5305]" /></div>
        <div className="flex w-[112px] gap-[4px]"><span>周</span><span>K</span></div>
        <div className="flex w-[101px] gap-[4px]"><span>月</span><span>K</span></div>
        <span>更多</span>
        <svg viewBox="0 0 8 9" className="mt-[18px] ml-[8px] h-[9px] w-[8px]"><path d="M8 0v9H0z" fill="#555" /></svg>
        <svg viewBox="0 0 28 28" className="ml-[58px] size-[29px]" fill="none" stroke="#666" strokeWidth="1.700" strokeLinejoin="round"><path d="M10 1.500c1.500 1.500 6.500 1.500 8 0l4.500 2.600c-.5 3 1.200 6 4 7.200v5.400c-2.800 1.200-4.500 4.200-4 7.200L18 26.500c-1.500-1.500-6.500-1.500-8 0l-4.500-2.600c.5-3-1.200-6-4-7.200v-5.400c2.800-1.200 4.500-4.200 4-7.200z" /><circle cx="14" cy="14" r="4.800" /></svg>
      </nav>

      <section className="flex h-[70px] shrink-0 pl-[11px]">
        <div className="mt-[20px] flex h-[29px] w-[89px] items-center justify-between rounded-[4px] border border-[#dfe1e8] bg-[#f7f8fb] pr-[4px] pl-[14px] text-[21.500px] leading-none font-medium">均线<svg viewBox="0 0 8 7" className="h-[8px] w-[8px]"><path d="M0 0h8L4 7z" fill="#555" /></svg></div>
        <div className="mt-[1px] ml-[37px] grid w-[456px] grid-cols-[171px_160px_125px] content-start text-[21px] leading-none font-light tracking-[-0.2px]">
          <div className="flex h-[33px] w-[121px] items-center justify-end gap-[6px] text-[#111]"><span>MA5:0.354</span><Arrow /></div>
          <div className="flex h-[33px] w-[120px] items-center gap-[6px] pl-[9px] text-[#e6198a]"><span>20:0.345</span><Arrow /></div>
          <div className="flex h-[33px] items-center gap-[6px] pl-[10px] text-[#666]"><span>60:0.336</span><Arrow /></div>
          <div className="flex h-[34px] w-[121px] items-center justify-end gap-[6px] text-[#233ecb]"><span>30:0.349</span><Arrow /></div>
        </div>
        <div className={`${tool} relative mt-[16px] gap-[3px] pr-[11px]`}><span>DK</span><span>点</span><svg viewBox="0 0 10 10" className="absolute right-[4px] bottom-[3px] size-[10px]"><path d="M10 0v10H0z" fill="#222" /></svg></div>
        <div className={`${tool} mt-[16px] ml-[10px]`}>前复权</div>
      </section>

      <Charts />

      <nav className="h-[65px] shrink-0 border-t-2 border-[#e3e4ea] px-[6px]">
        <div className="flex h-[63px] justify-between border-b-2 border-[#f0f0f2] px-[36px] pt-[17px] text-[26px] leading-[30px] font-medium text-[#666]">
          <div className="relative font-semibold text-[#f15a0a]">股吧<span className="absolute top-[36px] left-[9px] h-[6px] w-[36px] rounded-full bg-[#eb5305]" /></div>
          <span>资讯</span><span>公告</span><span>资金</span><span>持仓</span><span>资料</span>
        </div>
      </nav>

      <section className="flex h-[87px] shrink-0 gap-[9px] overflow-hidden px-[14px] pt-[8px]">
        <Card
          title="ETF高手圈"
          icon={
            <>
              <path d="M18 18c-5-1-8 3-7 8 .5 2 1.500 3 2.500 4-1.500 4-2.500 8-2.500 13h8c.5-5 2-9 4-12-4-4-5-8-5-13zM39 18c5-1 8 3 7 8-.5 2-1.500 3-2.500 4 1.500 4 2.500 8 2.500 13h-8c-.5-5-2-9-4-12 4-4 5-8 5-13z" fill="#fff" />
              <path d="M28.500 13.500c-6 0-9.500 4-9.500 9 0 3 1 5 3 7-2.500 4-4 9-4 14h21c0-5-1.500-10-4-14 2-2 3-4 3-7 0-5-3.500-9-9.500-9z" fill="#fff" stroke="#ff7a3c" strokeWidth="1.800" />
              <path d="M23.500 22c1.500 5 8.500 5 10 0" fill="none" stroke="#ff7433" strokeWidth="2.400" />
            </>
          }
        >
          精选机会&amp;高手策略
        </Card>
        <Card
          title="ETF人气榜"
          icon={
            <>
              <path d="M13 24.500h6.500L19 42h-7zM21.500 15H35l.5 27h-14.500zM38 29h5.500l1 13H38z" fill="#fff" />
              <path d="M25.500 25.500l3.500-2v9.500" fill="none" stroke="#ff6a22" strokeWidth="2.400" />
            </>
          }
        >
          即时排名第<span className="font-medium text-[#ff5a0a]">21</span>名
        </Card>
      </section>

      <footer className="relative flex h-[148px] shrink-0 border-t-2 border-[#dfe1e6] bg-[#f7f8fb]">
        <div className="flex w-[161px] flex-col items-center leading-none">
          <svg viewBox="0 0 14 8" className="mt-[6px] h-[7px] w-[14px]"><path d="M7 0l7 8H0z" fill="#666" /></svg>
          <span className="mt-[8px] text-[23px] leading-[24px] font-medium text-[#f52222]">3363.45</span>
          <span className="mt-[7px] flex gap-[9px] pl-[15px] text-[23px] leading-[24px] font-medium tracking-[0.2px] whitespace-nowrap text-[#5f5f5f]"><span>上证</span><span className="text-[#f52222]">0.70%</span></span>
        </div>
        <NavItem label="交易" width="w-[121px]">
          <path d="M12 4a16 16 0 0 1 23 20M29 31.500A16 16 0 0 1 5 11.500M.500 12.500L5.500 10v6M39.500 23.500l-5 2.500v-6" /><path d="M14.500 10.500l5.500 6.500 5.500-6.500M20 17v10M13.500 17.500h13M13.500 22.500h13" strokeWidth="2" />
        </NavItem>
        <NavItem label="定投" width="w-[121px]">
          <path d="M8 4H6a2 2 0 0 0-2 2v25a2 2 0 0 0 2 2h27a2 2 0 0 0 2-2V6a2 2 0 0 0-2-2h-1M12 4h16M12 1v6M28 1v6" /><path d="M10 24l7.500-6 4.500 4 7-7.500" strokeWidth="2" /><path d="M31 13l-1.500 6-5.500-5z" fill="#666" stroke="none" />
        </NavItem>
        <NavItem label="发帖" width="w-[122px]">
          <path d="M25 2H9a4 4 0 0 0-4 4v24a4 4 0 0 0 4 4h23a4 4 0 0 0 4-4V11" /><path d="M16 24.500l2-6L30.500 5l3 3-12 13zM31.500 4L34 1.500c2-1 3.500 1 2.500 2.500L34.500 7z" fill="#666" stroke="none" />
        </NavItem>
        <NavItem label="功能" width="w-[121px]">
          <rect x="5" y="3" width="13" height="13" rx="1.500" /><path d="M28 2l7 7.500-7 7.500-7-7.500z" strokeLinejoin="round" /><rect x="5" y="20" width="13" height="13" rx="1.500" /><rect x="21.500" y="20" width="13" height="13" rx="1.500" />
        </NavItem>
        <NavItem label="设自选" width="w-[122px]">
          <circle cx="20" cy="18" r="16.500" /><g fill="#666" stroke="none"><circle cx="13" cy="18" r="1.800" /><circle cx="20" cy="18" r="1.800" /><circle cx="27" cy="18" r="1.800" /></g>
        </NavItem>
        <div className="absolute bottom-[14px] left-[247px] h-[9px] w-[274px] rounded-full bg-black" />
      </footer>
    </div>
  );
}
